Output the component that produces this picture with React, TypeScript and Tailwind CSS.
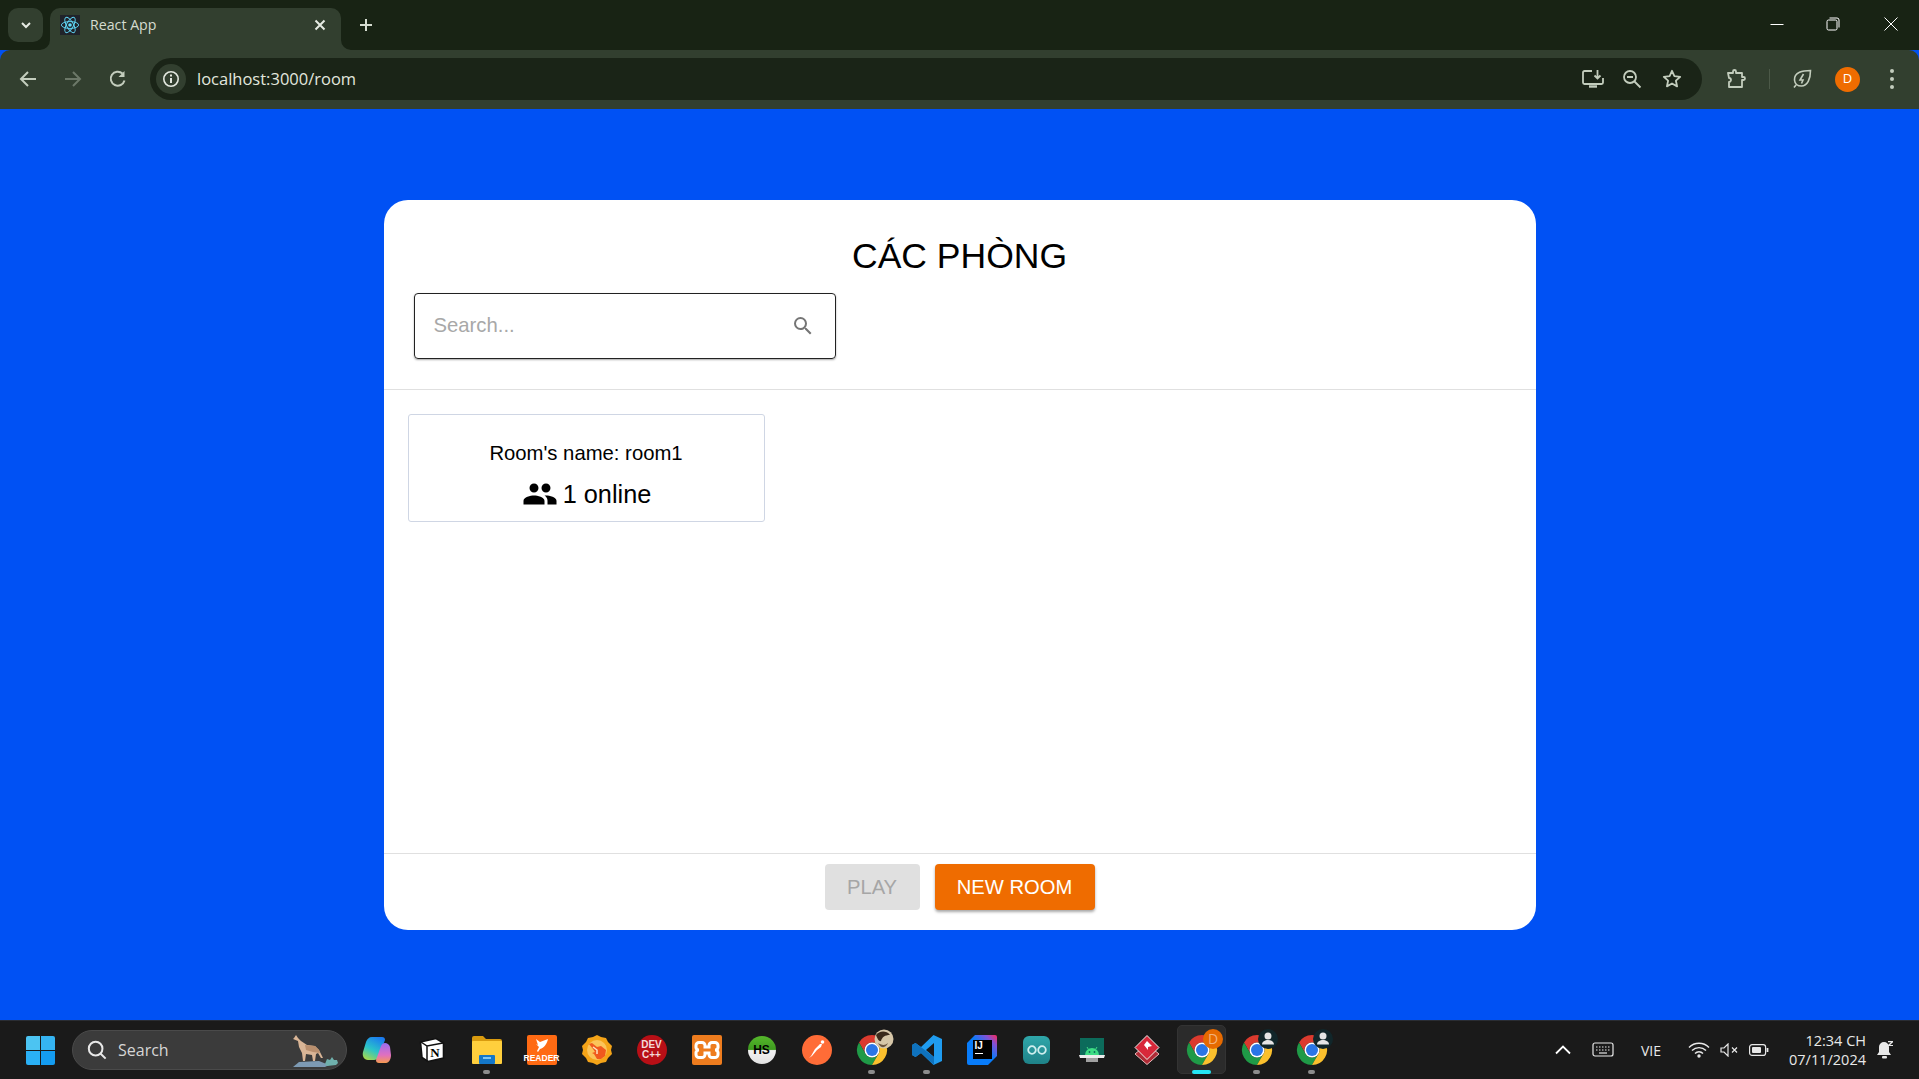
import React from "react";

const C = "#c3cdbd";

function Chrome({ badge }: { badge?: "photo" | "D" | "user" }) {
  return (
    <svg width="40" height="40" viewBox="0 0 40 40" className="overflow-visible">
      <path d="M7 12.500L13.500 23.750A7.500 7.500 0 0 1 20 12.500H33A15 15 0 0 0 7 12.500Z" fill="#db3a2e" />
      <path d="M20 35L26.500 23.750A7.500 7.500 0 0 1 13.500 23.750L7 12.500A15 15 0 0 0 20 35Z" fill="#1f9a47" />
      <path d="M33 12.500H20A7.500 7.500 0 0 1 26.500 23.750L20 35A15 15 0 0 0 33 12.500Z" fill="#fbc02d" />
      <circle cx="20" cy="20" r="7.500" fill="#fff" />
      <circle cx="20" cy="20" r="6" fill="#2a75e6" />
      {badge === "photo" && (
        <g>
          <circle cx="32" cy="9" r="9.500" fill="#d6c6a8" />
          <path d="M24 5c3-4 10-5 14 0-5 0-8 2-9 6-2 1-4-3-5-6Z" fill="#3b2a1c" />
          <path d="M26 13c3 2 7 3 10 0-2 5-7 6-10 0Z" fill="#6a533d" />
        </g>
      )}
      {badge === "D" && (
        <g>
          <circle cx="31" cy="9" r="10" fill="#e66a00" />
          <text x="31" y="14" textAnchor="middle" fontSize="14" fill="#f3b27c" fontFamily="Open Sans, sans-serif">D</text>
        </g>
      )}
      {badge === "user" && (
        <g>
          <circle cx="31" cy="9" r="10" fill="#11262a" />
          <circle cx="31" cy="6" r="3.500" fill="#e5e5e5" />
          <path d="M25 14.500c0-3 3-4.500 6-4.500s6 1.500 6 4.500Z" fill="#e5e5e5" />
        </g>
      )}
    </svg>
  );
}

function Slot({ children, dot, active }: { children: React.ReactNode; dot?: boolean; active?: boolean }) {
  return (
    <div className="relative flex h-[58px] w-[55px] shrink-0 items-center justify-center">
      {active && <div className="absolute left-[3px] top-[4px] h-[49px] w-[49px] rounded-[5px] border border-[#333] bg-[#2b2b2b]" />}
      <div className="relative flex h-[40px] w-[40px] items-center justify-center">{children}</div>
      {dot && <div className="absolute bottom-[5px] left-[24px] h-[4px] w-[7px] rounded-full bg-[#8c8c8c]" />}
      {active && <div className="absolute bottom-[5px] left-[18px] h-[4px] w-[19px] rounded-full bg-[#25e6f5]" />}
    </div>
  );
}

export default function App() {
  return (
    <div className="flex h-[1079px] w-[1919px] flex-col overflow-hidden bg-[#0051f4] font-['Liberation_Sans',Arial,sans-serif]">
      {/* Tab strip */}
      <div className="relative flex h-[50px] shrink-0 bg-[#182314]">
        <div className="ml-[8px] mt-[8px] flex h-[34px] w-[35px] items-center justify-center rounded-[10px] bg-[#323f2f]">
          <svg width="14" height="14" viewBox="0 0 14 14" fill="none" stroke="#e6ebe3" strokeWidth="2"><path d="M3 5l4 4 4-4" /></svg>
        </div>
        <div className="relative ml-[7px] mt-[8px] flex h-[42px] w-[291px] items-center rounded-t-[10px] bg-[#323f2f] pb-[8px] pl-[10px]">
          <svg className="absolute bottom-0 left-[-10px]" width="10" height="10" viewBox="0 0 10 10"><path d="M10 0v10H0a10 10 0 0 0 10-10Z" fill="#323f2f" /></svg>
          <svg className="absolute bottom-0 right-[-10px]" width="10" height="10" viewBox="0 0 10 10"><path d="M0 0v10h10A10 10 0 0 1 0 0Z" fill="#323f2f" /></svg>
          <div className="flex h-[20px] w-[20px] items-center justify-center bg-[#20232a]">
            <svg width="20" height="20" viewBox="-11 -11 22 22" fill="none" stroke="#61dafb" strokeWidth="1">
              <circle r="2" fill="#61dafb" stroke="none" />
              <ellipse rx="9.500" ry="3.800" />
              <ellipse rx="9.500" ry="3.800" transform="rotate(60)" />
              <ellipse rx="9.500" ry="3.800" transform="rotate(120)" />
            </svg>
          </div>
          <span className="ml-[10px] font-['Open_Sans',sans-serif] text-[14.200px] text-[#d5dcd0]">React App</span>
          <svg className="absolute right-[14px] top-[10px]" width="14" height="14" viewBox="0 0 14 14" stroke="#e6ebe3" strokeWidth="2"><path d="M2.500 2.500l9 9M11.500 2.500l-9 9" /></svg>
        </div>
        <div className="ml-[15px] mt-[15px] flex h-[20px] w-[20px] items-center justify-center">
          <svg width="14" height="14" viewBox="0 0 14 14" stroke="#d5dcd0" strokeWidth="2"><path d="M7 1v12M1 7h12" /></svg>
        </div>
        <div className="ml-auto mt-[14px] flex h-[20px] items-start text-white">
          <div className="flex h-[20px] w-[52px] items-center justify-center">
            <svg width="14" height="14" viewBox="0 0 14 14" stroke="#fff" strokeWidth="1"><path d="M0.500 7.500h13" /></svg>
          </div>
          <div className="flex h-[20px] w-[60px] items-center justify-center">
            <svg width="14" height="14" viewBox="0 0 14 14" fill="none" stroke="#fff" strokeWidth="1"><rect x="1" y="3" width="10" height="10" rx="1.500" /><path d="M3.500 1h7.500A2 2 0 0 1 13 3v7.500" /></svg>
          </div>
          <div className="flex h-[20px] w-[56px] items-center justify-center">
            <svg width="14" height="14" viewBox="0 0 14 14" stroke="#fff" strokeWidth="1"><path d="M0.500 0.500l13 13M13.500 0.500l-13 13" /></svg>
          </div>
        </div>
      </div>

      {/* Toolbar */}
      <div className="flex h-[59px] shrink-0 items-center rounded-t-[10px] bg-[#323f2f] pb-[1px]">
        <div className="ml-[18px] flex w-[45px] items-center">
          <svg width="20" height="20" viewBox="0 0 20 20" fill="none" stroke="#c3cdbd" strokeWidth="2"><path d="M18 10H3M10 3l-7 7 7 7" /></svg>
        </div>
        <div className="flex w-[45px] items-center">
          <svg width="20" height="20" viewBox="0 0 20 20" fill="none" stroke="#6c7868" strokeWidth="2"><path d="M2 10h15M10 3l7 7-7 7" /></svg>
        </div>
        <div className="flex w-[42px] items-center">
          <svg width="20" height="20" viewBox="0 0 20 20" fill="none" stroke="#c3cdbd" strokeWidth="2"><path d="M16.500 11.500A7 7 0 1 1 14.500 4.500" /><path d="M16.500 2v6h-6" fill="#c3cdbd" stroke="none" /></svg>
        </div>
        <div className="flex h-[42px] w-[1552px] items-center rounded-full bg-[#1a2417] pl-[6px]">
          <div className="flex h-[30px] w-[30px] items-center justify-center rounded-full bg-[#323f2f]">
            <svg width="18" height="18" viewBox="0 0 18 18" fill="none" stroke="#e2e7de" strokeWidth="1.600"><circle cx="9" cy="9" r="7.200" /><path d="M9 8v5" strokeWidth="2" /><path d="M9 4.500v2" strokeWidth="2" /></svg>
          </div>
          <span className="ml-[11px] pt-[1px] font-['Open_Sans',sans-serif] text-[16.500px] text-[#e2e7de]">localhost:3000/room</span>
          <div className="ml-auto mr-[10px] flex items-center">
            <div className="flex w-[36px] items-center justify-center">
              <svg width="22" height="20" viewBox="0 0 22 20" fill="none" stroke={C} strokeWidth="1.800"><path d="M10 2H2.500A1.500 1.500 0 0 0 1 3.500v10A1.500 1.500 0 0 0 2.500 15h17a1.500 1.500 0 0 0 1.500-1.500V9" /><path d="M15.500 1v8M12.500 6.500l3 3 3-3" /><path d="M7 17.500h8" strokeWidth="2.400" /></svg>
            </div>
            <div className="flex w-[41px] items-center justify-center">
              <svg width="20" height="20" viewBox="0 0 20 20" fill="none" stroke={C} strokeWidth="1.800"><circle cx="8" cy="8" r="6" /><path d="M5 8h6M12.500 12.500l6 6" /></svg>
            </div>
            <div className="flex w-[40px] items-center justify-center">
              <svg width="20" height="20" viewBox="0 0 20 20" fill="none" stroke={C} strokeWidth="1.800" strokeLinejoin="round"><path d="M10 1.800l2.400 5.400 5.800.6-4.300 3.900 1.200 5.700-5.100-2.900-5.100 2.900 1.200-5.700L1.800 7.800l5.800-.6Z" /></svg>
            </div>
          </div>
        </div>
        <div className="ml-[24px] flex w-[20px] items-center justify-center">
          <svg width="20" height="20" viewBox="0 0 20 20" fill="none" stroke={C} strokeWidth="1.800" strokeLinejoin="round"><path d="M2 4h5V2.500a1.500 1.500 0 0 1 3 0V4h6v4h1.500a1.500 1.500 0 0 1 0 3H16v7H3v-5a2 2 0 0 0 0-4Z" /></svg>
        </div>
        <div className="ml-[23px] h-[20px] w-[1px] bg-[#4c5948]" />
        <div className="ml-[22px] flex w-[20px] items-center justify-center">
          <svg width="20" height="20" viewBox="0 0 20 20" fill="none" stroke={C} strokeWidth="1.600"><path d="M2 18.500l2-2.500M18.500 1.500C11 1.500 2 3 2.500 11c.2 3.500 3 6 7 6 6 0 9-7 9-15.500Z" /><path d="M11.500 5l-3.500 6h3l-1.500 3.500" /></svg>
        </div>
        <div className="ml-[23px] flex h-[25px] w-[25px] items-center justify-center rounded-full bg-[#ef6c00] font-['Open_Sans',sans-serif] text-[13px] text-white">D</div>
        <div className="ml-[29px] flex w-[6px] flex-col items-center gap-[4px]">
          <div className="h-[4px] w-[4px] rounded-full bg-[#c3cdbd]" />
          <div className="h-[4px] w-[4px] rounded-full bg-[#c3cdbd]" />
          <div className="h-[4px] w-[4px] rounded-full bg-[#c3cdbd]" />
        </div>
      </div>

      {/* Page */}
      <main className="flex flex-1 items-start justify-center pt-[91px]">
        <div className="flex h-[730px] w-[1152px] flex-col rounded-[24px] bg-white">
          <div className="h-[190px] shrink-0 border-b border-[#e0e0e0]">
            <h1 className="mt-[34px] h-[59px] text-center text-[35.500px] leading-[44px] text-black">CÁC PHÒNG</h1>
            <div className="ml-[30px] flex h-[66px] w-[422px] items-center rounded-[4px] border border-[#222] pb-[2px] pl-[19px] pr-[20px] shadow-[0_1px_2px_rgba(0,0,0,0.35)]">
              <span className="text-[20.300px] text-[#a8a8a8]">Search...</span>
              <svg className="ml-auto mt-[2px]" width="24" height="24" viewBox="0 0 24 24" fill="#757575"><path d="M15.500 14h-.79l-.28-.27A6.470 6.470 0 0 0 16 9.500 6.500 6.500 0 1 0 9.500 16c1.610 0 3.090-.59 4.230-1.570l.27.28v.79l5 4.990L20.490 19l-4.990-5Zm-6 0C7.010 14 5 11.990 5 9.500S7.010 5 9.500 5 14 7.010 14 9.500 11.990 14 9.500 14Z" /></svg>
            </div>
          </div>
          <div className="flex-1 px-[24px] pt-[24px]">
            <div className="flex h-[108px] w-[357px] flex-col items-center rounded-[3px] border border-[#cfd6e4] pt-[26px] text-black">
              <div className="text-[20.300px] leading-[24px]">Room's name: room1</div>
              <div className="mt-[11px] flex items-center gap-[5px] pl-[1px] text-[25.300px] leading-[34px]">
                <svg width="36" height="36" viewBox="0 0 24 24" fill="#000"><path d="M16 11c1.660 0 2.990-1.340 2.990-3S17.660 5 16 5c-1.660 0-3 1.340-3 3s1.340 3 3 3Zm-8 0c1.660 0 2.990-1.340 2.990-3S9.660 5 8 5C6.340 5 5 6.340 5 8s1.340 3 3 3Zm0 2c-2.330 0-7 1.170-7 3.500V19h14v-2.500c0-2.330-4.670-3.500-7-3.500Zm8 0c-.29 0-.62.020-.97.050 1.160.84 1.970 1.970 1.970 3.450V19h6v-2.500c0-2.330-4.670-3.500-7-3.500Z" /></svg>
                <span>1 online</span>
              </div>
            </div>
          </div>
          <div className="flex h-[77px] shrink-0 justify-center gap-[15px] border-t border-[#e0e0e0] pt-[10px]">
            <div className="flex h-[46px] w-[95px] items-center justify-center rounded-[4px] bg-[#e0e0e0] text-[20.200px] text-[#a6a6a6]">PLAY</div>
            <div className="flex h-[46px] w-[160px] items-center justify-center rounded-[4px] bg-[#ef6c00] text-[20.200px] text-white shadow-[0_2px_3px_rgba(0,0,0,0.35)]">NEW ROOM</div>
          </div>
        </div>
      </main>

      {/* Taskbar */}
      <footer className="flex h-[59px] shrink-0 items-center border-t border-[#2a2d33] bg-[#1a1a1a]">
        <div className="ml-[26px] grid h-[29px] w-[29px] grid-cols-2 gap-[1px]">
          <div className="rounded-tl-[2px] bg-[#4cc4f2]" />
          <div className="rounded-tr-[2px] bg-[#35b4f2]" />
          <div className="rounded-bl-[2px] bg-[#2ab0f5]" />
          <div className="rounded-br-[2px] bg-[#149cf0]" />
        </div>
        <div className="relative ml-[17px] flex h-[40px] w-[275px] items-center rounded-full border border-[#4a4a4a] bg-[#3b3b3b] pl-[14px]">
          <svg width="20" height="20" viewBox="0 0 22 22" fill="none" stroke="#e8e8e8" strokeWidth="2.200"><circle cx="9.500" cy="9.500" r="7.500" /><path d="M14.500 14.500l6 6" /></svg>
          <span className="ml-[11px] font-['Open_Sans',sans-serif] text-[16px] text-[#d6d6d6]">Search</span>
          <svg className="absolute right-[7px] top-[3px]" width="48" height="34" viewBox="0 0 48 34">
            <path d="M2 33l6-5 20-1 10 4 -4 2Z" fill="#7d9ab3" />
            <path d="M34 30l2-5 3 1 2-3 2 3 3 0 1 3-2 2-9 1Z" fill="#6fb0ac" />
            <path d="M3 4l2-3 2 3 3 3 6 4 8 1 4 4 4 8-2 0-3-5-2 1-1 7-2 0-1-6-6-1-1 7-2 0-1-8-3-6-1-6-5-2Z" fill="#d9b596" />
            <path d="M14 11l10 1 4 4 1 3-7-1-7-2Z" fill="#b98f6e" />
          </svg>
        </div>
        <div className="ml-[2px] flex items-center">
          <Slot>
            <svg width="30" height="28" viewBox="0 0 30 28">
              <defs>
                <linearGradient id="cpa" x1="0.700" y1="0" x2="0.200" y2="1"><stop offset="0" stopColor="#1b7cf0" /><stop offset="0.550" stopColor="#2bc4c8" /><stop offset="1" stopColor="#a6d84a" /></linearGradient>
                <linearGradient id="cpb" x1="0.500" y1="0" x2="0.500" y2="1"><stop offset="0" stopColor="#9a6df0" /><stop offset="0.600" stopColor="#e070c0" /><stop offset="1" stopColor="#f59a50" /></linearGradient>
              </defs>
              <path d="M10 1h10c2 0 3 1 3 3l-6 16c-1 3-3 4-5 4H6c-4 0-6-4-5-8l3-10C5 3 7 1 10 1Z" fill="url(#cpa)" />
              <path d="M17 27h7c3 0 5-4 5-8l-1-8c-1-3-3-4-5-4-2 0-3 1-4 3l-5 14c0 2 1 3 3 3Z" fill="url(#cpb)" />
            </svg>
          </Slot>
          <Slot>
            <svg width="26" height="26" viewBox="0 0 26 26"><path d="M1.500 5L17 1.500l7.500 4.500v15L9 24.500l-6-4Z" fill="#fff" stroke="#111" strokeWidth="1.600" /><path d="M2 5l6 4 16-3M8 9v15" fill="none" stroke="#111" strokeWidth="1.500" /><text x="16" y="20" textAnchor="middle" fontSize="13" fontWeight="700" fill="#000" fontFamily="Liberation Serif, serif">N</text></svg>
          </Slot>
          <Slot dot>
            <svg width="30" height="28" viewBox="0 0 30 28"><path d="M0 2a2 2 0 0 1 2-2h9l3 3h14a2 2 0 0 1 2 2v5H0Z" fill="#d99b0f" /><rect x="0" y="5" width="30" height="23" rx="1" fill="#ffcf3d" /><rect x="7" y="19" width="16" height="9" rx="1" fill="#1477c9" /><rect x="11" y="21" width="8" height="2" fill="#7ec6f5" /></svg>
          </Slot>
          <Slot>
            <div className="flex h-[30px] w-[30px] flex-col items-center justify-end rounded-[2px] bg-[#ff6a13] pb-[2px] text-[8.500px] font-bold leading-[9px] text-white">
              <svg width="18" height="16" viewBox="0 0 18 16" fill="#fff"><path d="M3 1l4 3 8-3c-1 5-4 9-8 10l-2 3-1-1 2-4L3 6l2 1Z" /></svg>
              READER
            </div>
          </Slot>
          <Slot>
            <svg width="30" height="30" viewBox="0 0 30 30"><path d="M15 0l4 2 5 1 2 4 4 4-1 4 1 4-4 4-2 4-5 1-4 2-4-2-5-1-2-4-4-4 1-4-1-4 4-4 2-4 5-1Z" fill="#f5a418" /><circle cx="15" cy="15" r="10" fill="#fbc45a" /><path d="M7 9l3-1 5 4 4-1 5 4-1 6-4 3h-4l-3-5-2-1 3-1-2-3Z" fill="#f0591e" /><path d="M11 12l4 3v4" fill="none" stroke="#fde3c0" strokeWidth="1.500" /></svg>
          </Slot>
          <Slot>
            <div className="flex h-[30px] w-[30px] flex-col items-center justify-center rounded-full bg-[#b80f16] text-[10px] font-bold leading-[10px] text-[#f3d9d9]">
              <span>DEV</span>
              <span>C++</span>
            </div>
          </Slot>
          <Slot>
            <div className="flex h-[30px] w-[30px] items-center justify-center rounded-[2px] bg-[#ee7c1e]">
              <svg width="30" height="30" viewBox="0 0 30 30" fill="none" stroke="#fff" strokeWidth="3"><path d="M7 7.500h3a3 3 0 0 1 3 3V12h4v-1.500a3 3 0 0 1 3-3h3a3 3 0 0 1 3 3v2a3 3 0 0 1-3 2.500 3 3 0 0 1 3 2.500v2a3 3 0 0 1-3 3h-3a3 3 0 0 1-3-3V18h-4v1.500a3 3 0 0 1-3 3H7a3 3 0 0 1-3-3v-2A3 3 0 0 1 7 15a3 3 0 0 1-3-2.500v-2a3 3 0 0 1 3-3Z" /></svg>
            </div>
          </Slot>
          <Slot>
            <div className="flex h-[28px] w-[28px] items-center justify-center rounded-full bg-[linear-gradient(180deg,#56b82c_0%,#3e9a1f_48%,#f2f2f2_52%,#e2e2e2_100%)] text-[12px] font-bold text-black">HS</div>
          </Slot>
          <Slot>
            <svg width="30" height="30" viewBox="0 0 30 30"><circle cx="15" cy="15" r="15" fill="#ff6c37" /><path d="M7 23l3-2 5-6 4-3 1-3-2 0-5 5-4 7Z" fill="#fff" /><circle cx="20.500" cy="7" r="1.800" fill="#fff" /></svg>
          </Slot>
          <Slot dot><Chrome badge="photo" /></Slot>
          <Slot dot>
            <svg width="30" height="30" viewBox="0 0 30 30"><path d="M21.500 0L9 12 3.500 8 0 10v10l3.500 2L9 18l12.500 12 8.500-4V4Z" fill="#1f9cf0" /><path d="M22 8l-8 7 8 7Z" fill="#1a1a1a" /><path d="M0 10l3.500-2L22 22v8L9 18l-5.500 4L0 20Z" fill="#0f72bd" /></svg>
          </Slot>
          <Slot>
            <div className="relative h-[30px] w-[30px]">
              <svg className="absolute inset-0" width="30" height="30" viewBox="0 0 30 30"><defs><linearGradient id="ij" x1="0" y1="1" x2="1" y2="0"><stop offset="0.550" stopColor="#087cfa" /><stop offset="0.800" stopColor="#7f52d8" /><stop offset="1" stopColor="#fe2857" /></linearGradient></defs><path d="M8 0H28a2 2 0 0 1 2 2v19l-9 9H2a2 2 0 0 1-2-2V8Z" fill="url(#ij)" /></svg>
              <div className="absolute left-[6px] top-[5px] flex h-[19px] w-[19px] flex-col bg-black pl-[2px] text-[10px] font-bold leading-[11px] text-white">IJ<div className="mt-[2px] h-[1px] w-[8px] bg-white" /></div>
            </div>
          </Slot>
          <Slot>
            <div className="flex h-[28px] w-[27px] items-center justify-center rounded-[6px] bg-[linear-gradient(180deg,#2fa7aa,#1f8288)]">
              <svg width="20" height="10" viewBox="0 0 20 10" fill="none" stroke="#cfeeee" strokeWidth="1.800"><circle cx="5" cy="5" r="3.800" /><circle cx="15" cy="5" r="3.800" /></svg>
            </div>
          </Slot>
          <Slot>
            <svg width="26" height="24" viewBox="0 0 26 24"><rect x="1" y="0" width="24" height="17" fill="#0c6b5b" /><path d="M6 17a7 7 0 0 1 14 0Z" fill="#3ddc84" /><path d="M8 9l1.500 2.500M18 9l-1.500 2.500" stroke="#3ddc84" /><circle cx="10.500" cy="14" r="0.900" fill="#0c6b5b" /><circle cx="15.500" cy="14" r="0.900" fill="#0c6b5b" /><path d="M0 17h26l-1 3H1Z" fill="#ececec" /><rect x="7" y="20" width="12" height="4" fill="#a0a0a0" /></svg>
          </Slot>
          <Slot>
            <svg width="26" height="30" viewBox="0 0 26 30"><path d="M13 9l12 10-12 10.500L1 19Z" fill="#b02a35" stroke="#e5b8b8" /><path d="M13 0.500l12 12-12 12-12-12Z" fill="#d8283a" stroke="#eee" /><path d="M13 6l5 5-4 1v3l-4-5Z" fill="#fff" /></svg>
          </Slot>
          <Slot active><Chrome badge="D" /></Slot>
          <Slot dot><Chrome badge="user" /></Slot>
          <Slot dot><Chrome badge="user" /></Slot>
        </div>
        <div className="ml-auto mr-[25px] flex items-center text-[#e8e8e8]">
          <svg width="16" height="10" viewBox="0 0 16 10" fill="none" stroke="#fff" strokeWidth="1.800"><path d="M1 8.500l7-7 7 7" /></svg>
          <svg className="ml-[21px]" width="22" height="16" viewBox="0 0 22 16" fill="none" stroke="#e8e8e8" strokeWidth="1.200"><rect x="1" y="1" width="20" height="13" rx="2" /><path d="M4 5h14M4 8h14" strokeDasharray="1.500 1.500" /><path d="M7 11h8" /></svg>
          <span className="ml-[27px] w-[22px] font-['Open_Sans',sans-serif] text-[14px]">VIE</span>
          <svg className="ml-[25px]" width="22" height="16" viewBox="0 0 22 16" fill="none" stroke="#e8e8e8" strokeWidth="1.400"><path d="M1 5.500a14 14 0 0 1 20 0M4 8.500a10 10 0 0 1 14 0M7 11.500a5.500 5.500 0 0 1 8 0" /><circle cx="11" cy="14" r="1" fill="#e8e8e8" /></svg>
          <svg className="ml-[10px]" width="20" height="14" viewBox="0 0 20 14" fill="none" stroke="#e8e8e8" strokeWidth="1.200"><path d="M1 5v4h3l4 4V1L4 5Z" /><path d="M12 4.500l5 5M17 4.500l-5 5" /></svg>
          <svg className="ml-[9px]" width="20" height="12" viewBox="0 0 20 12" fill="none" stroke="#e8e8e8" strokeWidth="1.200"><rect x="0.600" y="0.600" width="16" height="10.800" rx="2.500" /><rect x="3" y="3" width="9" height="6" rx="1" fill="#e8e8e8" stroke="none" /><path d="M18.500 4v4" strokeWidth="1.800" /></svg>
          <div className="ml-[19px] flex w-[78px] flex-col items-end font-['Open_Sans',sans-serif] text-[14.500px] leading-[19px]">
            <span>12:34 CH</span>
            <span>07/11/2024</span>
          </div>
          <svg className="ml-[10px]" width="18" height="20" viewBox="0 0 18 20" fill="#e8e8e8"><path d="M8 2a5 5 0 0 1 5 5v5l2 3H1l2-3V7a5 5 0 0 1 5-5Z" /><rect x="6" y="16" width="5" height="2.500" rx="1" /><path d="M12 1h5v1.200l-3 2.800h3v1h-5V5l3-2.800h-3Z" /></svg>
        </div>
      </footer>
    </div>
  );
}
